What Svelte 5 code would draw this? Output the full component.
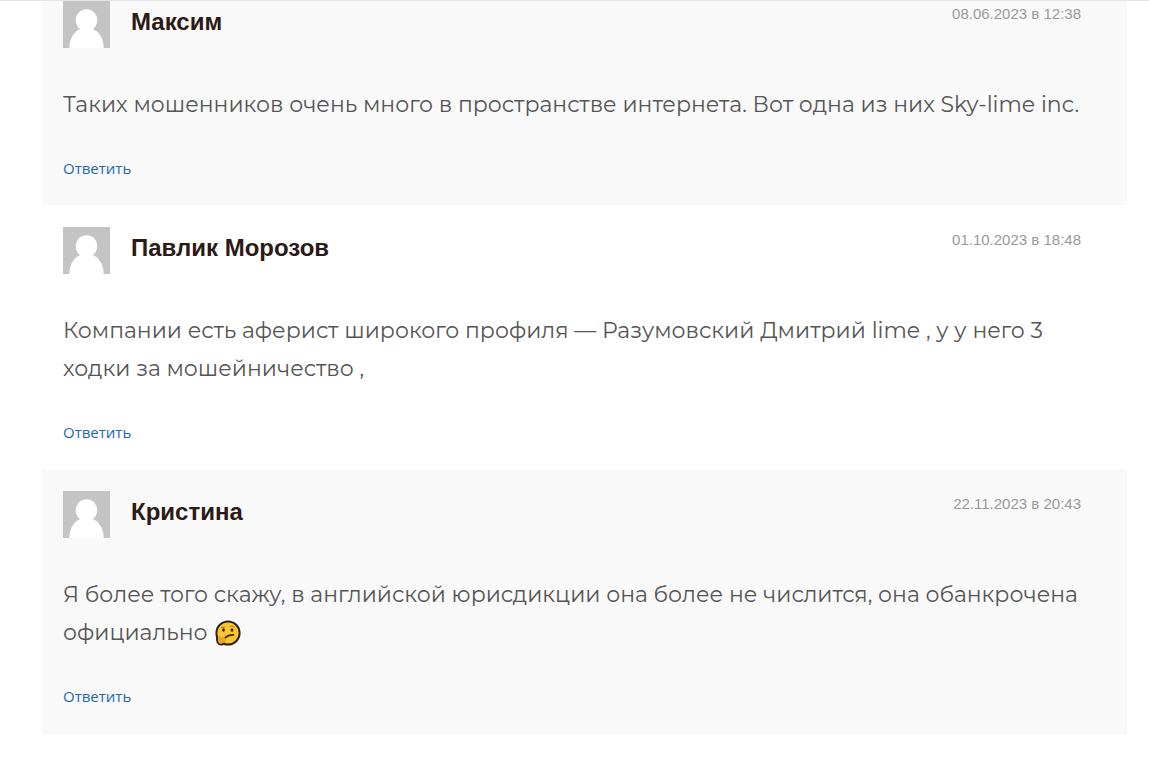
<script lang="ts">
	type Comment = {
		id: number;
		author: string;
		date: string;
		datetime: string;
		text: string;
		thinking?: boolean;
	};

	const comments: Comment[] = [
		{
			id: 1,
			author: 'Максим',
			date: '08.06.2023 в 12:38',
			datetime: '2023-06-08T12:38',
			text: 'Таких мошенников очень много в пространстве интернета. Вот одна из них Sky-lime inc.'
		},
		{
			id: 2,
			author: 'Павлик Морозов',
			date: '01.10.2023 в 18:48',
			datetime: '2023-10-01T18:48',
			text: 'Компании есть аферист широкого профиля — Разумовский Дмитрий lime , у у него 3 ходки за мошейничество ,'
		},
		{
			id: 3,
			author: 'Кристина',
			date: '22.11.2023 в 20:43',
			datetime: '2023-11-22T20:43',
			text: 'Я более того скажу, в английской юрисдикции она более не числится, она обанкрочена официально',
			thinking: true
		}
	];
</script>

<main class="comments">
	{#each comments as comment (comment.id)}
		<article class="comment">
			<header class="comment-header">
				<svg class="avatar" viewBox="0 0 47 47" aria-hidden="true">
					<rect width="47" height="47" fill="#c4c4c4" />
					<ellipse cx="23.5" cy="19.3" rx="10.8" ry="11" fill="#fff" />
					<path
						d="M6.300 47c0-9 4.500-17 12-19.500h10.400c7.500 2.500 12 10.500 12 19.500z"
						fill="#fff"
					/>
				</svg>
				<h3 class="author">{comment.author}</h3>
				<time class="date" datetime={comment.datetime}>{comment.date}</time>
			</header>
			<p class="text">
				{comment.text}
				{#if comment.thinking}
					<svg class="emoji" viewBox="0 0 26 26" role="img" aria-label="Задумчивый смайлик">
						<circle cx="13" cy="13" r="11.600" fill="#fbc531" stroke="#29261f" stroke-width="2" />
						<path
							d="M3 17c1-1.500 2.500-1 3 .5l5-.8c1.500 0 1.500 1.500.5 2-.5 3-2.500 5-5 5.200C3.500 24 2 21 3 17z"
							fill="#eda426"
						/>
						<path
							d="M1.900 16.500C1.500 21.500 2.500 25 7 24.600l3-1.200"
							fill="none"
							stroke="#29261f"
							stroke-width="1.800"
						/>
						<ellipse cx="8.500" cy="10" rx="1.400" ry="1.700" fill="#38291a" />
						<ellipse cx="17" cy="10" rx="1.400" ry="1.700" fill="#38291a" />
						<path
							d="M10.500 17.300c2.500-2.300 5-2.300 8-2.500"
							fill="none"
							stroke="#44301a"
							stroke-width="1.700"
							stroke-linecap="round"
						/>
						<path
							d="M6.500 7.500l3-.5M15.500 6.500c1.500-.6 2.800-.4 3.800.4"
							fill="none"
							stroke="#a8741e"
							stroke-width="1"
							stroke-linecap="round"
						/>
					</svg>
				{/if}
			</p>
			<a class="reply" href="#comment-{comment.id}">Ответить</a>
		</article>
	{/each}
</main>

<style>
	:global(body) {
		background: #fff;
	}

	.comments {
		border-top: 1px solid #e4e4e4;
		padding: 0 22px 28px 42px;
		font-family: Montserrat, Inter, sans-serif;
	}

	.comment {
		padding: 22px 22px 25px 21px;
	}

	.comment:nth-child(odd) {
		background: #f9f9f9;
	}

	/* the first comment is flush with the top of the list */
	.comment:first-child {
		padding-top: 0;
	}

	.comment:last-child {
		border-bottom: 1px dotted #eee;
	}

	.comment-header {
		display: flex;
		align-items: flex-start;
		gap: 21px;
		padding-right: 24px;
	}

	.avatar {
		flex: none;
		width: 47px;
		height: 47px;
	}

	.author {
		flex: 1;
		margin: 0;
		font: bold 24px/42px 'Liberation Sans', Arial, sans-serif;
		color: #2b1a15;
	}

	.date {
		font: 15px/26px 'Liberation Sans', Arial, sans-serif;
		color: #999;
	}

	.text {
		margin: 38px 0 32px;
		font-size: 22px;
		line-height: 38px;
		color: #555;
	}

	.emoji {
		width: 26px;
		height: 26px;
		margin-left: 2px;
		vertical-align: -6px;
	}

	.reply {
		display: block;
		width: fit-content;
		font: 15px/24px 'Open Sans', sans-serif;
		color: #2468b8;
		text-decoration: none;
	}

	.reply:hover {
		text-decoration: underline;
	}
</style>
